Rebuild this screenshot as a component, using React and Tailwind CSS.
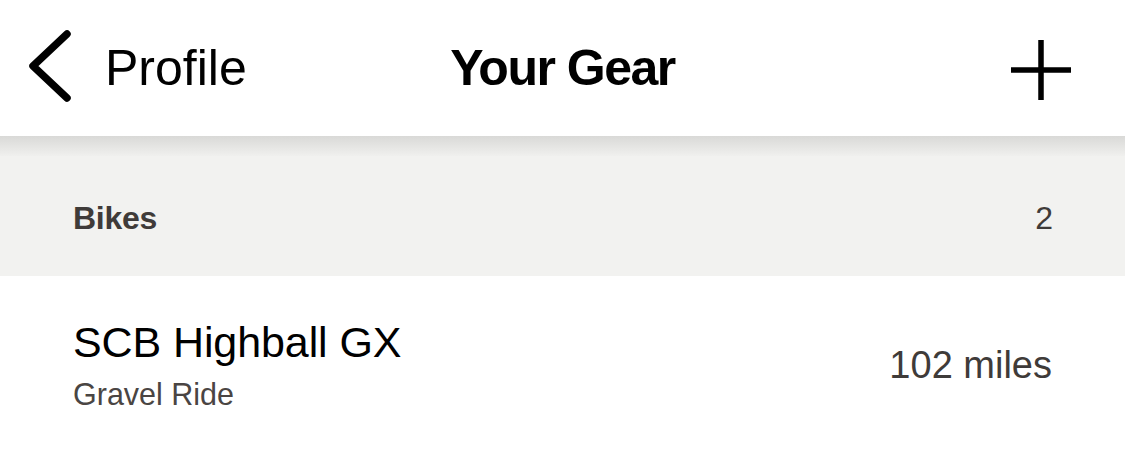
export default function App() {
  const font = { fontFamily: '"Liberation Sans", Arial, sans-serif' };
  return (
    <div className="w-[1125px] h-[457px] bg-white overflow-hidden" style={font}>
      <header className="relative z-10 h-[136px] bg-white grid grid-cols-[1fr_auto_1fr] items-center">
        <div className="flex items-center pl-[26px]">
          <svg width="48" height="74" viewBox="0 0 48 74" className="mt-[-2px]">
            <polyline points="41,4 7,36 41,68" fill="none" stroke="#000" strokeWidth="7.5" strokeLinecap="round" strokeLinejoin="round" />
          </svg>
          <span className="ml-[31px] text-[50px] leading-none text-black">Profile</span>
        </div>
        <div className="text-[50px] leading-none font-bold text-black tracking-[-1.5px]">Your Gear</div>
        <div className="flex justify-end pr-[54px]">
          <svg width="60" height="60" viewBox="0 0 60 60" className="mt-[4px]">
            <path d="M30 0V60M0 30H60" stroke="#000" strokeWidth="5.5" />
          </svg>
        </div>
      </header>
      <section className="relative h-[140px] bg-[#f2f2f0] flex items-center justify-between px-[73px] pt-[24px] pr-[72px]">
        <div className="absolute left-0 right-0 top-0 h-[20px] bg-gradient-to-b from-[#d9d9d7] to-[#f0f0ee]" />
        <span className="relative text-[32px] font-bold text-[#3f3b39] tracking-[-0.3px]">Bikes</span>
        <span className="relative text-[32px] text-[#3f3b39]">2</span>
      </section>
      <div className="flex items-center justify-between pl-[73px] pr-[73px] pt-[41px]">
        <div className="flex flex-col">
          <span className="text-[43px] leading-[50px] text-black tracking-[-0.1px]">SCB Highball GX</span>
          <span className="mt-[9px] text-[30.5px] leading-[36px] text-[#4a4543]">Gravel Ride</span>
        </div>
        <span className="text-[38px] text-[#3f3b39] mt-[2px]">102 miles</span>
      </div>
    </div>
  );
}
